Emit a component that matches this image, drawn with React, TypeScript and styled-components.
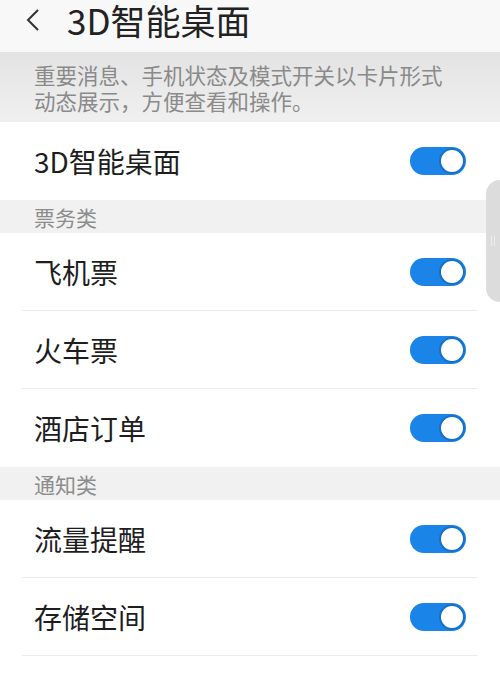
import React from 'react';
import styled, { createGlobalStyle } from 'styled-components';

const GlobalStyle = createGlobalStyle`
  html, body {
    margin: 0;
    padding: 0;
    background: #ffffff;
    font-family: "Noto Sans CJK SC", "Noto Sans", sans-serif;
  }
`;

const Page = styled.div`
  position: relative;
  width: 500px;
  height: 673px;
  overflow: hidden;
  background: #ffffff;
`;

const Header = styled.div`
  display: flex;
  align-items: center;
  height: 40px;
  padding: 0 0 12px 0;
  background: #f8f8f8;
`;

const BackButton = styled.div`
  display: flex;
  align-items: center;
  justify-content: center;
  width: 40px;
  margin-left: 13px;
  margin-right: 14px;
`;

const Title = styled.h1`
  margin: 0;
  font-size: 35px;
  line-height: 40px;
  font-weight: 400;
  color: #222222;
`;

const Description = styled.p`
  margin: 0;
  padding: 10px 34px 8px;
  font-size: 21.5px;
  line-height: 26px;
  color: #8a8a8a;
  background: linear-gradient(#e3e3e3, #f0f0f0);
`;

const SectionTitle = styled.div`
  height: 33px;
  padding: 0 34px;
  display: flex;
  align-items: center;
  font-size: 21px;
  color: #8c8c8c;
  background: #f1f1f1;
`;

const Row = styled.div<{ divider: boolean }>`
  position: relative;
  height: 78px;
  display: flex;
  align-items: center;
  justify-content: space-between;
  padding: 0 34px 0 34px;
  &::after {
    content: '';
    display: ${p => (p.divider ? 'block' : 'none')};
    position: absolute;
    left: 22px;
    right: 22px;
    bottom: 0;
    height: 1px;
    background: #ececec;
  }
`;

const Label = styled.span`
  font-size: 28px;
  color: #1e1e1e;
`;

const Track = styled.div<{ on: boolean }>`
  width: 56px;
  height: 28px;
  border-radius: 14px;
  background: ${p => (p.on ? '#1a84e8' : '#d0d0d0')};
  display: flex;
  align-items: center;
  justify-content: ${p => (p.on ? 'flex-end' : 'flex-start')};
  box-sizing: border-box;
  padding: 0 1px;
`;

const Thumb = styled.div`
  width: 22px;
  height: 22px;
  border-radius: 50%;
  background: #ffffff;
  border: 2px solid #1670c9;
`;

const ScrollHandle = styled.div`
  position: absolute;
  right: 0;
  top: 180px;
  width: 14px;
  height: 122px;
  border-radius: 14px 0 0 14px;
  background: #dcdcdc;
  display: flex;
  align-items: center;
  justify-content: center;
  gap: 2px;
  span {
    width: 1px;
    height: 10px;
    background: #eeeeee;
  }
`;

const Toggle: React.FC<{ on?: boolean }> = ({ on = true }) => (
  <Track on={on}>
    <Thumb />
  </Track>
);

const App: React.FC = () => {
  return (
    <Page>
      <GlobalStyle />
      <Header>
        <BackButton>
          <svg width="16" height="24" viewBox="0 0 16 24">
            <polyline
              points="13,2 3,12 13,22"
              fill="none"
              stroke="#333"
              strokeWidth="2"
              strokeLinejoin="miter"
            />
          </svg>
        </BackButton>
        <Title>3D智能桌面</Title>
      </Header>
      <Description>
        重要消息、手机状态及模式开关以卡片形式
        <br />
        动态展示，方便查看和操作。
      </Description>
      <Row divider={false}>
        <Label>3D智能桌面</Label>
        <Toggle />
      </Row>
      <SectionTitle>票务类</SectionTitle>
      <Row divider>
        <Label>飞机票</Label>
        <Toggle />
      </Row>
      <Row divider>
        <Label>火车票</Label>
        <Toggle />
      </Row>
      <Row divider={false}>
        <Label>酒店订单</Label>
        <Toggle />
      </Row>
      <SectionTitle>通知类</SectionTitle>
      <Row divider>
        <Label>流量提醒</Label>
        <Toggle />
      </Row>
      <Row divider>
        <Label>存储空间</Label>
        <Toggle />
      </Row>
      <ScrollHandle>
        <span />
        <span />
      </ScrollHandle>
    </Page>
  );
};

export default App;
